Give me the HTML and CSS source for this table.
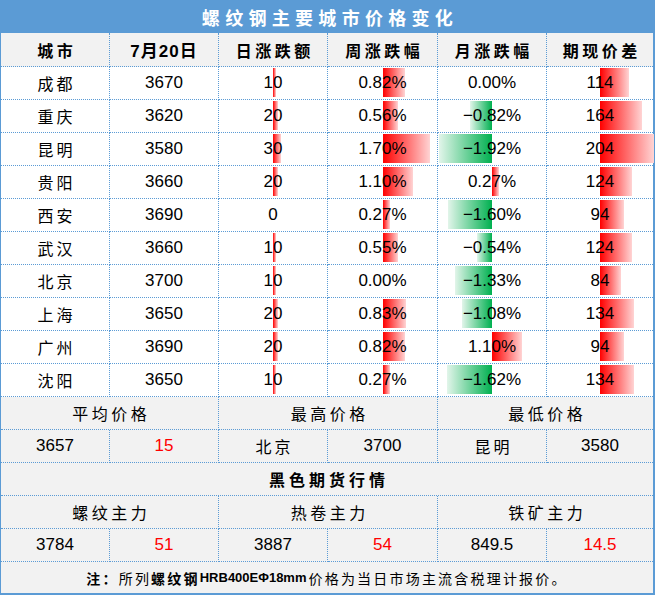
FILE: index.html
```html
<!DOCTYPE html>
<html lang="zh-CN">
<head>
<meta charset="utf-8">
<title>螺纹钢主要城市价格变化</title>
<link rel="stylesheet" href="styles.css">
</head>
<body>
<div class="panel">
  <div class="title">螺纹钢主要城市价格变化</div>
  <div class="grid">
    <div class="c hd cjk">城市</div>
    <div class="c hd date">7月20日</div>
    <div class="c hd cjk">日涨跌额</div>
    <div class="c hd cjk">周涨跌幅</div>
    <div class="c hd cjk">月涨跌幅</div>
    <div class="c hd cjk last">期现价差</div>

    <div class="c city">成都</div><div class="c num">3670</div>
    <div class="c num"><span class="bar up" style="width:3px"></span><span class="t">10</span></div>
    <div class="c num"><span class="bar up" style="width:22px"></span><span class="t">0.82%</span></div>
    <div class="c num"><span class="t">0.00%</span></div>
    <div class="c num last"><span class="bar up" style="width:29px"></span><span class="t">114</span></div>

    <div class="c city">重庆</div><div class="c num">3620</div>
    <div class="c num"><span class="bar up" style="width:5px"></span><span class="t">20</span></div>
    <div class="c num"><span class="bar up" style="width:15px"></span><span class="t">0.56%</span></div>
    <div class="c num"><span class="bar down" style="width:22px"></span><span class="t">−0.82%</span></div>
    <div class="c num last"><span class="bar up" style="width:42px"></span><span class="t">164</span></div>

    <div class="c city">昆明</div><div class="c num">3580</div>
    <div class="c num"><span class="bar up" style="width:8px"></span><span class="t">30</span></div>
    <div class="c num"><span class="bar up" style="width:47px"></span><span class="t">1.70%</span></div>
    <div class="c num"><span class="bar down" style="width:53px"></span><span class="t">−1.92%</span></div>
    <div class="c num last"><span class="bar up" style="width:54px"></span><span class="t">204</span></div>

    <div class="c city">贵阳</div><div class="c num">3660</div>
    <div class="c num"><span class="bar up" style="width:5px"></span><span class="t">20</span></div>
    <div class="c num"><span class="bar up" style="width:30px"></span><span class="t">1.10%</span></div>
    <div class="c num"><span class="bar up" style="width:7px"></span><span class="t">0.27%</span></div>
    <div class="c num last"><span class="bar up" style="width:32px"></span><span class="t">124</span></div>

    <div class="c city">西安</div><div class="c num">3690</div>
    <div class="c num"><span class="t">0</span></div>
    <div class="c num"><span class="bar up" style="width:7px"></span><span class="t">0.27%</span></div>
    <div class="c num"><span class="bar down" style="width:44px"></span><span class="t">−1.60%</span></div>
    <div class="c num last"><span class="bar up" style="width:24px"></span><span class="t">94</span></div>

    <div class="c city">武汉</div><div class="c num">3660</div>
    <div class="c num"><span class="bar up" style="width:3px"></span><span class="t">10</span></div>
    <div class="c num"><span class="bar up" style="width:15px"></span><span class="t">0.55%</span></div>
    <div class="c num"><span class="bar down" style="width:15px"></span><span class="t">−0.54%</span></div>
    <div class="c num last"><span class="bar up" style="width:32px"></span><span class="t">124</span></div>

    <div class="c city">北京</div><div class="c num">3700</div>
    <div class="c num"><span class="bar up" style="width:3px"></span><span class="t">10</span></div>
    <div class="c num"><span class="t">0.00%</span></div>
    <div class="c num"><span class="bar down" style="width:37px"></span><span class="t">−1.33%</span></div>
    <div class="c num last"><span class="bar up" style="width:21px"></span><span class="t">84</span></div>

    <div class="c city">上海</div><div class="c num">3650</div>
    <div class="c num"><span class="bar up" style="width:5px"></span><span class="t">20</span></div>
    <div class="c num"><span class="bar up" style="width:23px"></span><span class="t">0.83%</span></div>
    <div class="c num"><span class="bar down" style="width:30px"></span><span class="t">−1.08%</span></div>
    <div class="c num last"><span class="bar up" style="width:34px"></span><span class="t">134</span></div>

    <div class="c city">广州</div><div class="c num">3690</div>
    <div class="c num"><span class="bar up" style="width:5px"></span><span class="t">20</span></div>
    <div class="c num"><span class="bar up" style="width:22px"></span><span class="t">0.82%</span></div>
    <div class="c num"><span class="bar up" style="width:30px"></span><span class="t">1.10%</span></div>
    <div class="c num last"><span class="bar up" style="width:24px"></span><span class="t">94</span></div>

    <div class="c city">沈阳</div><div class="c num">3650</div>
    <div class="c num"><span class="bar up" style="width:3px"></span><span class="t">10</span></div>
    <div class="c num"><span class="bar up" style="width:7px"></span><span class="t">0.27%</span></div>
    <div class="c num"><span class="bar down" style="width:45px"></span><span class="t">−1.62%</span></div>
    <div class="c num last"><span class="bar up" style="width:34px"></span><span class="t">134</span></div>

    <div class="c g label span2">平均价格</div>
    <div class="c g label span2">最高价格</div>
    <div class="c g label span2 last">最低价格</div>

    <div class="c g num">3657</div>
    <div class="c g num red">15</div>
    <div class="c g city">北京</div>
    <div class="c g num">3700</div>
    <div class="c g city">昆明</div>
    <div class="c g num last">3580</div>

    <div class="c g section span6">黑色期货行情</div>

    <div class="c g label span2">螺纹主力</div>
    <div class="c g label span2">热卷主力</div>
    <div class="c g label span2 last">铁矿主力</div>

    <div class="c g num">3784</div>
    <div class="c g num red">51</div>
    <div class="c g num">3887</div>
    <div class="c g num red">54</div>
    <div class="c g num">849.5</div>
    <div class="c g num red last">14.5</div>
  </div>
  <div class="note"><b class="nb">注：</b>所列<b class="nb">螺纹钢</b><b class="lat">HRB400EΦ18mm</b>价格为当日市场主流含税理计报价。</div>
</div>
</body>
</html>
```
FILE: styles.css
```css
html, body {
  margin: 0;
  padding: 0;
  background: #ffffff;
}
.panel {
  width: 655px;
  height: 595px;
  box-sizing: border-box;
  border-left: 1px solid #5b9bd5;
  border-right: 2px solid #5b9bd5;
  border-bottom: 2px solid #5b9bd5;
  background: #f2f2f2;
  display: flex;
  flex-direction: column;
  font-family: "Noto Sans CJK SC", sans-serif;
  color: #000;
}
.title {
  height: 33px;
  background: #5b9bd5;
  color: #ffffff;
  font-size: 18px;
  font-weight: 700;
  letter-spacing: 5.3px;
  padding-left: 5px;
  display: flex;
  align-items: center;
  justify-content: center;
  margin-left: -1px;
  margin-right: -2px;
}
.grid {
  display: grid;
  grid-template-columns: 109px 109px 109px 110px 109px 106px;
  grid-template-rows: 34px repeat(15, 33px);
}
.c {
  position: relative;
  box-sizing: border-box;
  border-right: 1px dotted #5b9bd5;
  border-bottom: 1px dotted #5b9bd5;
  display: flex;
  align-items: center;
  justify-content: center;
  background: #ffffff;
  white-space: nowrap;
}
.c.last {
  border-right: none;
}
.hd {
  background: #f2f2f2;
  font-size: 16px;
  font-weight: 700;
}
.hd.cjk {
  letter-spacing: 3.5px;
  padding-left: 3.5px;
}
.hd.date {
  font-family: "Liberation Sans", "Noto Sans CJK SC", sans-serif;
  font-size: 17px;
  letter-spacing: 1px;
}
.city {
  font-size: 16px;
  letter-spacing: 3px;
  padding-left: 3px;
}
.num {
  font-family: "Liberation Sans", sans-serif;
  font-size: 17px;
}
.g {
  background: #f2f2f2;
}
.label {
  font-size: 16px;
  letter-spacing: 3.5px;
  padding-left: 3.5px;
}
.section {
  font-size: 16px;
  font-weight: 700;
  letter-spacing: 4px;
  padding-left: 4px;
}
.span2 {
  grid-column: span 2;
}
.span6 {
  grid-column: span 6;
  border-right: none;
}
.red {
  color: #ff0000;
}
.t {
  position: relative;
  z-index: 1;
}
.bar {
  position: absolute;
  top: 1px;
  bottom: 2px;
  z-index: 0;
}
.bar.up {
  left: 50%;
  background: linear-gradient(to right, #ff0000, #ffd4d4);
}
.bar.down {
  right: 50%;
  background: linear-gradient(to left, #00b050, #e2f5ea);
}
.note {
  flex: 1;
  display: flex;
  align-items: center;
  justify-content: center;
  font-size: 14px;
  letter-spacing: 2.2px;
  white-space: nowrap;
}
.nb {
  font-weight: 700;
}
.lat {
  font-family: "Liberation Sans", sans-serif;
  font-size: 13px;
  font-weight: 700;
  letter-spacing: 0;
  margin-right: 2px;
}
```
